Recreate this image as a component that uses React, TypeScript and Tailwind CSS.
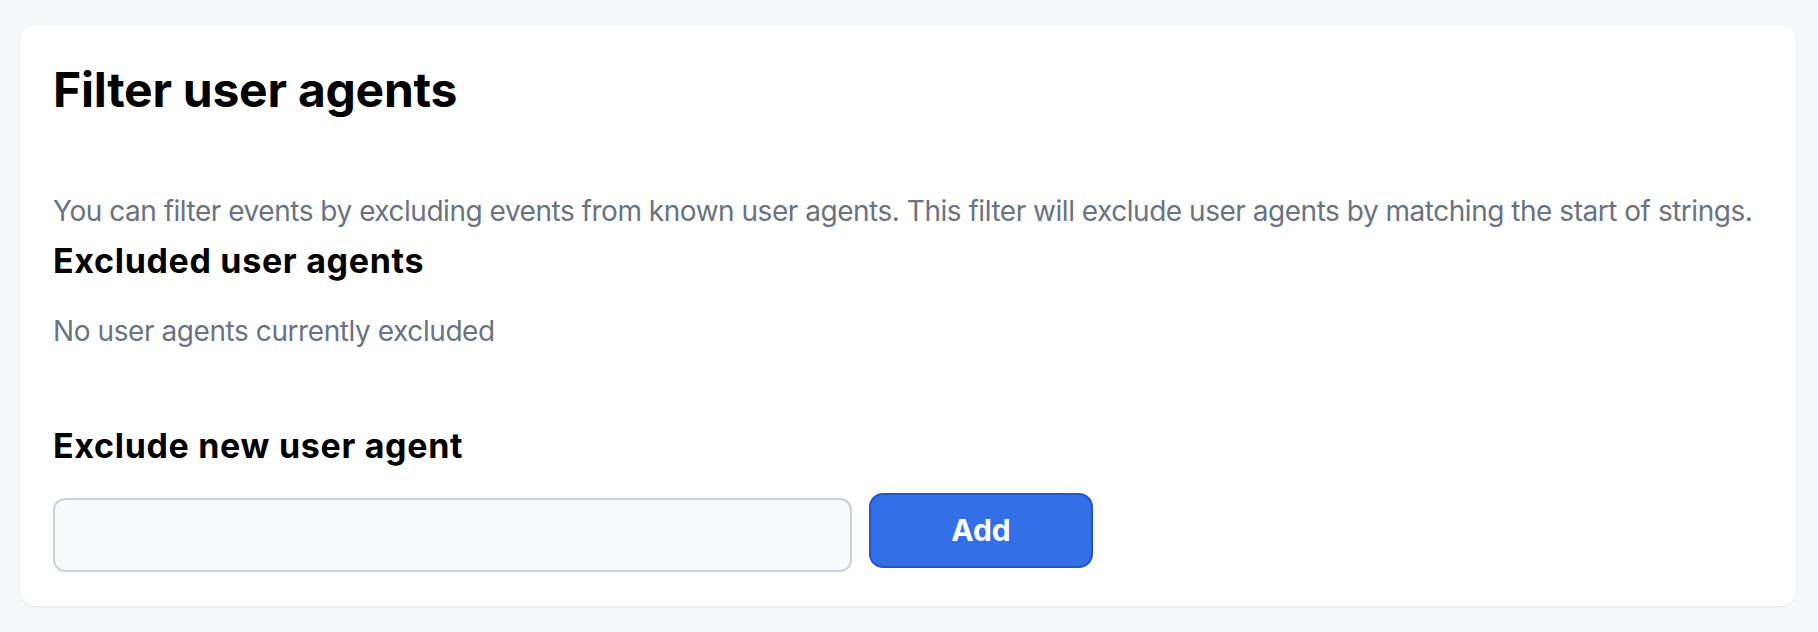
export default function App() {
  return (
    <div
      className="min-h-screen bg-[#f7f8fa] pl-5 pr-[22px] pt-[25px] pb-[27px]"
      style={{ fontFamily: 'Inter, "Noto Sans", sans-serif' }}
    >
      <div className="rounded-2xl bg-white px-[33px] pt-[37px] pb-[34px] shadow-[0_1px_3px_rgba(0,0,0,0.08)]">
        {/* Page title */}
        <h1 className="text-[48px] font-bold leading-[56px] tracking-[-0.005em] text-black">Filter user agents</h1>

        <p className="mt-[75px] whitespace-nowrap text-[28px] leading-[36px] tracking-[-0.017em] text-[#6b7280]">
          You can filter events by excluding events from known user agents. This filter will exclude user agents by
          matching the start of strings.
        </p>

        {/* Current exclusions */}
        <h2 className="mt-[11px] text-[34px] font-bold leading-[42px] tracking-[0.02em] text-black">
          Excluded user agents
        </h2>
        <p className="mt-[31px] text-[28px] leading-[36px] tracking-[-0.015em] text-[#6b7280]">
          No user agents currently excluded
        </p>

        {/* Add form */}
        <h2 className="mt-[76px] text-[34px] font-bold leading-[42px] tracking-[0.02em] text-black">
          Exclude new user agent
        </h2>
        <div className="mt-[26px] flex items-start gap-[17px]">
          <input
            type="text"
            className="mt-[5px] h-[74px] w-[799px] rounded-xl border-2 border-[#cbd1dc] bg-[#f8f9fb] px-4 text-[28px] outline-none"
          />
          <button className="h-[75px] w-[224px] rounded-[14px] border-2 border-[#2357c9] bg-[#3370e7] text-[30px] font-bold text-white">
            Add
          </button>
        </div>
      </div>
    </div>
  );
}
